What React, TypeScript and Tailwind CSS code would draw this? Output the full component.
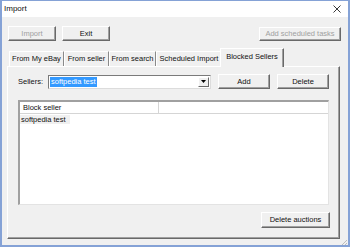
import React from 'react';

type BtnProps = { label: string; disabled?: boolean; className?: string };

function WinButton({ label, disabled, className = '' }: BtnProps) {
  return (
    <button
      className={`flex items-center justify-center bg-[#f0f0f0] border border-t-white border-l-white border-r-[#696969] border-b-[#696969] shadow-[inset_-1px_-1px_0_#a0a0a0] text-[7.5px] leading-none ${
        disabled ? 'text-[#a0a0a0]' : 'text-[#111]'
      } ${className}`}
    >
      {label}
    </button>
  );
}

const tabs = [
  { label: 'From My eBay', w: 'w-[55px]' },
  { label: 'From seller', w: 'w-[45px]' },
  { label: 'From search', w: 'w-[47px]' },
  { label: 'Scheduled Import', w: 'w-[66px]' },
];

export default function App() {
  return (
    <div className="w-[350px] h-[247px] flex flex-col bg-[#f0f0f0] border-x-2 border-b-2 border-t border-[#85a2d6] font-['Liberation_Sans',Arial,sans-serif] text-[#111] overflow-hidden">
      {/* title bar */}
      <div className="h-[16px] bg-white flex items-center justify-between pl-[2px] pr-[7px] shrink-0">
        <span className="text-[8px] leading-none">Import</span>
        <svg width="8" height="8" viewBox="0 0 8 8">
          <path d="M0.5 0.5 L7.5 7.5 M7.5 0.5 L0.5 7.5" stroke="#222" strokeWidth="0.9" />
        </svg>
      </div>

      {/* toolbar buttons */}
      <div className="flex items-start pt-[9px] pl-[6px] pr-[7px] shrink-0">
        <WinButton label="Import" disabled className="w-[48px] h-[15px]" />
        <WinButton label="Exit" className="w-[48px] h-[15px] ml-[6px]" />
        <WinButton label="Add scheduled tasks" disabled className="w-[82px] h-[14px] ml-auto mt-[1px]" />
      </div>

      {/* tab strip */}
      <div className="flex items-end pl-[7px] mt-[7px] h-[18px] shrink-0 relative z-10">
        {tabs.map((t) => (
          <div
            key={t.label}
            className={`${t.w} h-[15px] flex items-center justify-center text-[7.5px] leading-none border-t border-l border-white border-r border-r-[#8a8a8a]`}
          >
            {t.label}
          </div>
        ))}
        <div className="w-[64px] h-[19px] -ml-[2px] -mb-px flex items-center justify-center text-[7.5px] leading-none bg-[#f0f0f0] border-t border-l border-white border-r border-r-[#696969] shadow-[inset_-1px_0_0_#a0a0a0] pb-[2px]">
          Blocked Sellers
        </div>
      </div>

      {/* tab panel */}
      <div className="ml-[5px] mr-[8px] h-[173px] flex flex-col border-t border-l border-white border-r border-b border-r-[#696969] border-b-[#696969] shadow-[inset_-1px_-1px_0_#a0a0a0] shrink-0">
        <div className="flex items-center pt-[7px] pl-[10px]">
          <span className="text-[7.5px] leading-none w-[30px]">Sellers:</span>
          <div className="w-[163px] h-[14px] bg-white border border-[#7a7a7a] border-b-[#dcdcdc] border-r-[#dcdcdc] flex items-center pl-px pr-px">
            <span className="bg-[#3399ff] text-white text-[7.5px] leading-none h-[10px] flex items-center px-px">
              softpedia test
            </span>
            <div className="ml-auto w-[11px] h-[10px] bg-[#f0f0f0] border border-t-white border-l-white border-r-[#696969] border-b-[#696969] flex items-center justify-center">
              <svg width="5" height="3" viewBox="0 0 5 3">
                <path d="M0 0 L5 0 L2.5 3 Z" fill="#000" />
              </svg>
            </div>
          </div>
          <WinButton label="Add" className="w-[52px] h-[15px] ml-[7px]" />
          <WinButton label="Delete" className="w-[52px] h-[15px] ml-[7px]" />
        </div>

        {/* list view */}
        <div className="ml-[10px] mt-[11px] w-[311px] h-[105px] bg-white border-t-2 border-l-2 border-[#a0a0a0] border-r border-b border-r-[#e3e3e3] border-b-[#e3e3e3] flex flex-col">
          <div className="h-[12px] flex border-b border-[#d5d5d5] shrink-0">
            <div className="w-[139px] border-r border-[#d5d5d5] flex items-center pl-[3px] text-[7.5px] leading-none">
              Block seller
            </div>
            <div className="flex-1" />
          </div>
          <div className="flex pt-px">
            <span className="flex items-center h-[9px] bg-[#f0f0f0] pl-[1px] pr-[4px] text-[7.5px] leading-none">
              softpedia test
            </span>
          </div>
        </div>

        <div className="flex justify-end pr-[9px] mt-[7px]">
          <WinButton label="Delete auctions" className="w-[69px] h-[16px]" />
        </div>
      </div>

      {/* bottom strip with grip */}
      <div className="flex-1 flex items-end justify-end">
        <svg width="8" height="8" viewBox="0 0 8 8">
          <path d="M7 1 L1 7 M7 4 L4 7 M7 6.5 L6.5 7" stroke="#b0b0b0" strokeWidth="0.8" />
        </svg>
      </div>
    </div>
  );
}
